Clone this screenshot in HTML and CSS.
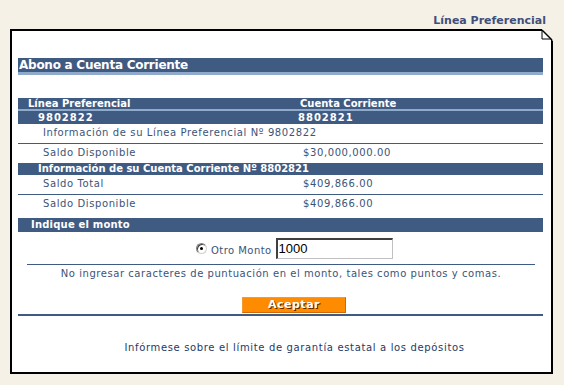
FILE: index.html
```html
<!DOCTYPE html>
<html lang="es">
<head>
<meta charset="utf-8">
<title>Abono a Cuenta Corriente</title>
<link rel="stylesheet" href="styles.css">
</head>
<body>
<div class="page">
  <div class="top-title">Línea Preferencial</div>
  <div class="card">
    <svg class="dog-ear" width="12" height="12" viewBox="0 0 12 12">
      <polygon points="0,0 12,0 12,12" fill="#F5F1E6"/>
      <polygon points="1,1 1,10 10,10" fill="#fff" stroke="#000" stroke-width="1"/>
      <line x1="0" y1="0.5" x2="1" y2="0.5" stroke="#000" stroke-width="1"/>
      <line x1="1" y1="1" x2="11" y2="11" stroke="#000" stroke-width="1.4"/>
    </svg>
    <div class="section-head">Abono a Cuenta Corriente</div>

    <div class="grid">
      <div class="th c1">Línea Preferencial</div>
      <div class="th c2">Cuenta Corriente</div>
      <div class="num c1">9802822</div>
      <div class="num c2">8802821</div>
    </div>

    <div class="row line"><span class="label">Información de su Línea Preferencial Nº 9802822</span></div>
    <div class="row"><span class="label">Saldo Disponible</span><span class="value">$30,000,000.00</span></div>
    <div class="subhead">Información de su Cuenta Corriente Nº 8802821</div>
    <div class="row line"><span class="label">Saldo Total</span><span class="value">$409,866.00</span></div>
    <div class="row"><span class="label">Saldo Disponible</span><span class="value">$409,866.00</span></div>

    <div class="bar">Indique el monto</div>

    <div class="amount">
      <span class="radio"><span class="dot"></span></span>
      <span class="radio-label">Otro Monto</span>
      <span class="input">1000</span>
    </div>
    <div class="notice">No ingresar caracteres de puntuación en el monto, tales como puntos y comas.</div>

    <div class="actions"><span class="btn">Aceptar</span></div>

    <div class="footer">Infórmese sobre el límite de garantía estatal a los depósitos</div>
  </div>
</div>
</body>
</html>
```

FILE: styles.css
```css
html, body {
  margin: 0;
  padding: 0;
  background: #F5F1E6;
}
body {
  font-family: "DejaVu Sans", Verdana, sans-serif;
  font-size: 10px;
  color: #3B5478;
}
.page {
  width: 564px;
  height: 385px;
  padding-top: 14px;
  box-sizing: border-box;
}
.top-title {
  text-align: right;
  padding-right: 18px;
  font-weight: bold;
  font-size: 11px;
  color: #3E4F7A;
  height: 15px;
  line-height: 14px;
}
.card {
  position: relative;
  margin-left: 10px;
  width: 543px;
  height: 345px;
  box-sizing: border-box;
  border: 2px solid #000;
  background: #fff;
  padding: 27px 8px 0 6px;
}
.dog-ear {
  position: absolute;
  top: -2px;
  right: -2px;
}
.section-head {
  background: #3F5B82;
  color: #fff;
  font-weight: bold;
  font-size: 12px;
  letter-spacing: -0.25px;
  height: 14px;
  line-height: 14px;
  padding-left: 1px;
  border-bottom: 3px solid #8FAACB;
}
.grid {
  margin-top: 23px;
  display: grid;
  grid-template-columns: 282px 1fr;
}
.th {
  background: #3F5B82;
  color: #fff;
  font-weight: bold;
  font-size: 10px;
  height: 11px;
  line-height: 12px;
  border-bottom: 2px solid #8FAACB;
}
.th.c1 { padding-left: 10px; }
.num {
  background: #3F5B82;
  color: #fff;
  font-weight: bold;
  font-size: 10px;
  letter-spacing: 1px;
  height: 13px;
  line-height: 13px;
}
.num.c1 { padding-left: 20px; }
.num.c2 { padding-left: 0; margin-left: -2px; }
.row {
  display: grid;
  grid-template-columns: 285px 1fr;
  height: 19px;
  line-height: 18px;
  letter-spacing: 0.6px;
}
.row.line {
  border-bottom: 1px solid #3F5B82;
}
.row .label { padding-left: 25px; white-space: nowrap; }
.subhead {
  background: #3F5B82;
  color: #fff;
  font-weight: bold;
  height: 12px;
  line-height: 12px;
  padding-left: 20px;
  letter-spacing: 0;
}
.bar {
  margin-top: 4px;
  background: #3F5B82;
  color: #fff;
  font-weight: bold;
  font-size: 10px;
  letter-spacing: 0.2px;
  height: 14px;
  line-height: 14px;
  padding-left: 13px;
}
.amount {
  display: flex;
  align-items: center;
  height: 21px;
  margin-top: 6px;
  padding-left: 178px;
}
.radio {
  width: 11px;
  height: 11px;
  box-sizing: border-box;
  border-radius: 50%;
  border: 1px solid #808080;
  border-right-color: #d4d0c8;
  border-bottom-color: #d4d0c8;
  background: #fff;
  display: flex;
  align-items: center;
  justify-content: center;
  box-shadow: inset 1px 1px 0 #404040;
}
.dot {
  width: 3px;
  height: 3px;
  border-radius: 50%;
  background: #000;
}
.radio-label {
  margin-left: 4px;
  margin-right: 4px;
  padding-top: 3px;
  letter-spacing: 0.45px;
}
.input {
  width: 117px;
  height: 21px;
  box-sizing: border-box;
  border: 2px solid #000;
  border-right: 1px solid #c0c0c0;
  border-bottom: 1px solid #c0c0c0;
  border-top-color: #404040;
  border-left-color: #404040;
  font-family: "Liberation Sans", Arial, sans-serif;
  font-size: 13px;
  line-height: 17px;
  color: #000;
  padding-left: 1px;
}
.notice {
  margin: 5px 8px 0 9px;
  border-top: 1px solid #3F5B82;
  text-align: center;
  padding-top: 3px;
  height: 18px;
  letter-spacing: 0.55px;
}
.actions {
  margin-top: 11px;
  padding-left: 224px;
  height: 17px;
  border-bottom: 2px solid #3F5B82;
}
.btn {
  display: block;
  width: 104px;
  height: 16px;
  box-sizing: border-box;
  background: #FF8C00;
  border: 1px solid #F59A30;
  border-right-color: #D06A00;
  border-bottom-color: #D06A00;
  color: #fff;
  font-weight: bold;
  font-size: 11px;
  text-align: center;
  line-height: 14px;
  letter-spacing: 0.5px;
  text-shadow: 1px 1px 0 #5a2a00;
}
.footer {
  margin-top: 26px;
  padding-left: 28px;
  text-align: center;
  color: #1F3A66;
  letter-spacing: 0.65px;
}
```
